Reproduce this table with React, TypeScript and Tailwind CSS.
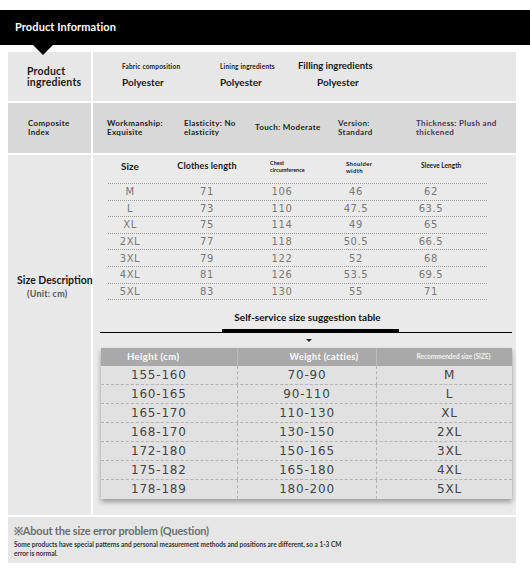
const sizeRows = [
  ["M", "71", "106", "46", "62"],
  ["L", "73", "110", "47.5", "63.5"],
  ["XL", "75", "114", "49", "65"],
  ["2XL", "77", "118", "50.5", "66.5"],
  ["3XL", "79", "122", "52", "68"],
  ["4XL", "81", "126", "53.5", "69.5"],
  ["5XL", "83", "130", "55", "71"],
];

const suggestRows = [
  ["155-160", "70-90", "M"],
  ["160-165", "90-110", "L"],
  ["165-170", "110-130", "XL"],
  ["168-170", "130-150", "2XL"],
  ["172-180", "150-165", "3XL"],
  ["175-182", "165-180", "4XL"],
  ["178-189", "180-200", "5XL"],
];

const label = "font-['Lato','Open_Sans',sans-serif] font-bold";
const num = "font-['DejaVu_Sans','Liberation_Sans',sans-serif]";

function IngredientCol({
  title,
  width,
}: {
  title: string;
  width: string;
}) {
  return (
    <div className={`flex flex-col pt-[10px] ${width}`}>
      <span className={`${label} text-[6.5px] leading-[10px] tracking-[0.2px] text-[#222]`}>
        {title}
      </span>
      <span className={`${label} mt-[4px] text-[10px] leading-[12px] text-[#1a1a1a]`}>
        Polyester
      </span>
    </div>
  );
}

function SizeTable() {
  return (
    <div className="ml-[15px] w-[379px]">
      <div className={`flex h-[28px] items-start pt-[5px] ${label} text-[#1a1a1a]`}>
        <div className="w-[44px] text-center text-[10px] leading-[12px]">Size</div>
        <div className="w-[110px] text-center text-[9px] leading-[12px] tracking-[0.1px]">
          Clothes length
        </div>
        <div className="w-[40px] whitespace-nowrap pl-[8px] text-[5.5px] leading-[7px]">
          Chest
          <br />
          circumference
        </div>
        <div className="w-[108px] whitespace-nowrap pl-[44px] text-[6px] leading-[7px] tracking-[0.3px]">
          Shoulder
          <br />
          width
        </div>
        <div className="w-[42px] whitespace-nowrap pl-[11px] text-[6.5px] leading-[12px]">
          Sleeve Length
        </div>
      </div>
      <div className="border-t border-dotted border-[#9a9a9a]">
        {sizeRows.map((r) => (
          <div
            key={r[0]}
            className={`flex h-[16.6px] items-center border-b border-dotted border-[#9a9a9a] ${num} text-[10px] tracking-[0.6px] text-[#777]`}
          >
            <div className="w-[44px] text-center">{r[0]}</div>
            <div className="w-[110px] text-center">{r[1]}</div>
            <div className="w-[40px] text-center">{r[2]}</div>
            <div className="w-[108px] text-center">{r[3]}</div>
            <div className="w-[42px] text-center">{r[4]}</div>
          </div>
        ))}
      </div>
    </div>
  );
}

function SuggestTable() {
  return (
    <div className="ml-[8px] w-[411px] shadow-[0_3px_5px_rgba(0,0,0,0.35)]">
      <div className={`grid h-[18px] grid-cols-[137px_139px_135px] items-center bg-[#a9a9a9] ${label} text-white`}>
        <div className="h-full border-r border-[#bcbcbc] pl-[26px] text-[9.5px] leading-[18px] tracking-[0.4px]">
          Height (cm)
        </div>
        <div className="h-full border-r border-[#bcbcbc] pl-[34px] text-center text-[9px] leading-[18px] tracking-[0.4px]">
          Weight (catties)
        </div>
        <div className="pl-[18px] text-center text-[6.5px] leading-[18px] text-[#f2f2f2]">
          Recommended size (SIZE)
        </div>
      </div>
      {suggestRows.map((r, i) => (
        <div
          key={r[0]}
          className={`grid h-[19px] grid-cols-[137px_139px_135px] bg-[#e1e1e1] ${num} text-[12px] leading-[19px] tracking-[0.8px] text-[#444] ${
            i < suggestRows.length - 1 ? "border-b border-dashed border-[#b3b3b3]" : ""
          }`}
        >
          <div className="border-r border-dashed border-[#b3b3b3] pl-[30px]">{r[0]}</div>
          <div className="border-r border-dashed border-[#b3b3b3] text-center">{r[1]}</div>
          <div className="pl-[10px] text-center">{r[2]}</div>
        </div>
      ))}
    </div>
  );
}

export default function App() {
  return (
    <div className="h-[571px] w-[530px] overflow-hidden bg-white pt-[10px]">
      <div className="relative z-10 flex h-[35px] items-center bg-black pl-[15px]">
        <span className={`${label} text-[11px] tracking-[0.1px] text-white`}>
          Product Information
        </span>
        <div className="absolute left-[33px] top-full h-0 w-0 border-x-[10.5px] border-t-[10px] border-x-transparent border-t-black" />
      </div>

      <div className="ml-[8px] mt-[7px] flex w-[508px] flex-col gap-[2px] bg-white">
        {/* row 1 */}
        <div className="flex h-[49px] gap-[2px]">
          <div className="flex w-[83px] items-center bg-[#e7e7e7] pl-[19px]">
            <span className={`${label} text-[10.5px] leading-[11px] tracking-[0.2px] text-[#1a1a1a]`}>
              Product
              <br />
              ingredients
            </span>
          </div>
          <div className="flex flex-1 bg-[#e7e7e7] pl-[29px]">
            <IngredientCol title="Fabric composition" width="w-[98px]" />
            <IngredientCol title="Lining ingredients" width="w-[78px]" />
            <div className="flex flex-col pt-[8px]">
              <span className={`${label} text-[9.5px] leading-[12px] text-[#1a1a1a]`}>
                Filling ingredients
              </span>
              <span className={`${label} mt-[4px] pl-[19px] text-[10px] leading-[12px] text-[#1a1a1a]`}>
                Polyester
              </span>
            </div>
          </div>
        </div>

        {/* row 2 */}
        <div className={`flex h-[50px] gap-[2px] ${label} text-[8px] leading-[9.5px] tracking-[0.35px] text-[#222]`}>
          <div className="flex w-[83px] items-center bg-[#d8d8d8] pl-[20px]">
            <span>
              Composite
              <br />
              Index
            </span>
          </div>
          <div className="flex flex-1 items-center bg-[#d8d8d8] pl-[14px]">
            <div className="w-[77px]">
              Workmanship:
              <br />
              Exquisite
            </div>
            <div className="w-[71px]">
              Elasticity: No
              <br />
              elasticity
            </div>
            <div className="w-[83px]">Touch: Moderate</div>
            <div className="w-[78px] text-[#2a3040]">
              Version:
              <br />
              Standard
            </div>
            <div className="text-[#43395a]">
              Thickness: Plush and
              <br />
              thickened
            </div>
          </div>
        </div>

        {/* row 3 */}
        <div className="flex h-[360px] gap-[2px]">
          <div className="flex w-[83px] flex-col bg-[#e8e8e8] pl-[9px] pt-[119px]">
            <span className={`${label} whitespace-nowrap text-[10.5px] leading-[13px] text-[#1a1a1a]`}>
              Size Description
            </span>
            <span className={`${label} pl-[10px] text-[9px] leading-[13px] tracking-[0.2px] text-[#555]`}>
              (Unit: cm)
            </span>
          </div>
          <div className="flex flex-1 flex-col bg-[#eaeaea]">
            <SizeTable />
            <div className={`mt-[10px] text-center ${label} pl-[6px] text-[10px] leading-[15px] text-[#111]`}>
              Self-service size suggestion table
            </div>
            <div className="ml-[7px] mt-[4px] flex h-[4px] w-[412px] items-end">
              <div className="h-px w-[122px] bg-black" />
              <div className="h-[4px] w-[177px] bg-black" />
              <div className="h-px flex-1 bg-black" />
            </div>
            <div className="ml-[213px] mt-[6px] h-0 w-0 border-x-[3px] border-t-[3px] border-x-transparent border-t-[#222]" />
            <div className="mt-[6px]">
              <SuggestTable />
            </div>
          </div>
        </div>

        {/* footer */}
        <div className="flex h-[46px] flex-col bg-[#e6e6e6] pl-[6px] pt-[7px]">
          <span className={`${label} text-[11px] leading-[14px] tracking-[-0.2px] text-[#6e6e6e]`}>
            ※About the size error problem (Question)
          </span>
          <span className={`${label} mt-[2px] whitespace-nowrap text-[6.5px] leading-[9px] text-[#333]`}>
            Some products have special patterns and personal measurement methods and positions are different, so a 1-3 CM
            <br />
            error is normal.
          </span>
        </div>
      </div>
    </div>
  );
}
